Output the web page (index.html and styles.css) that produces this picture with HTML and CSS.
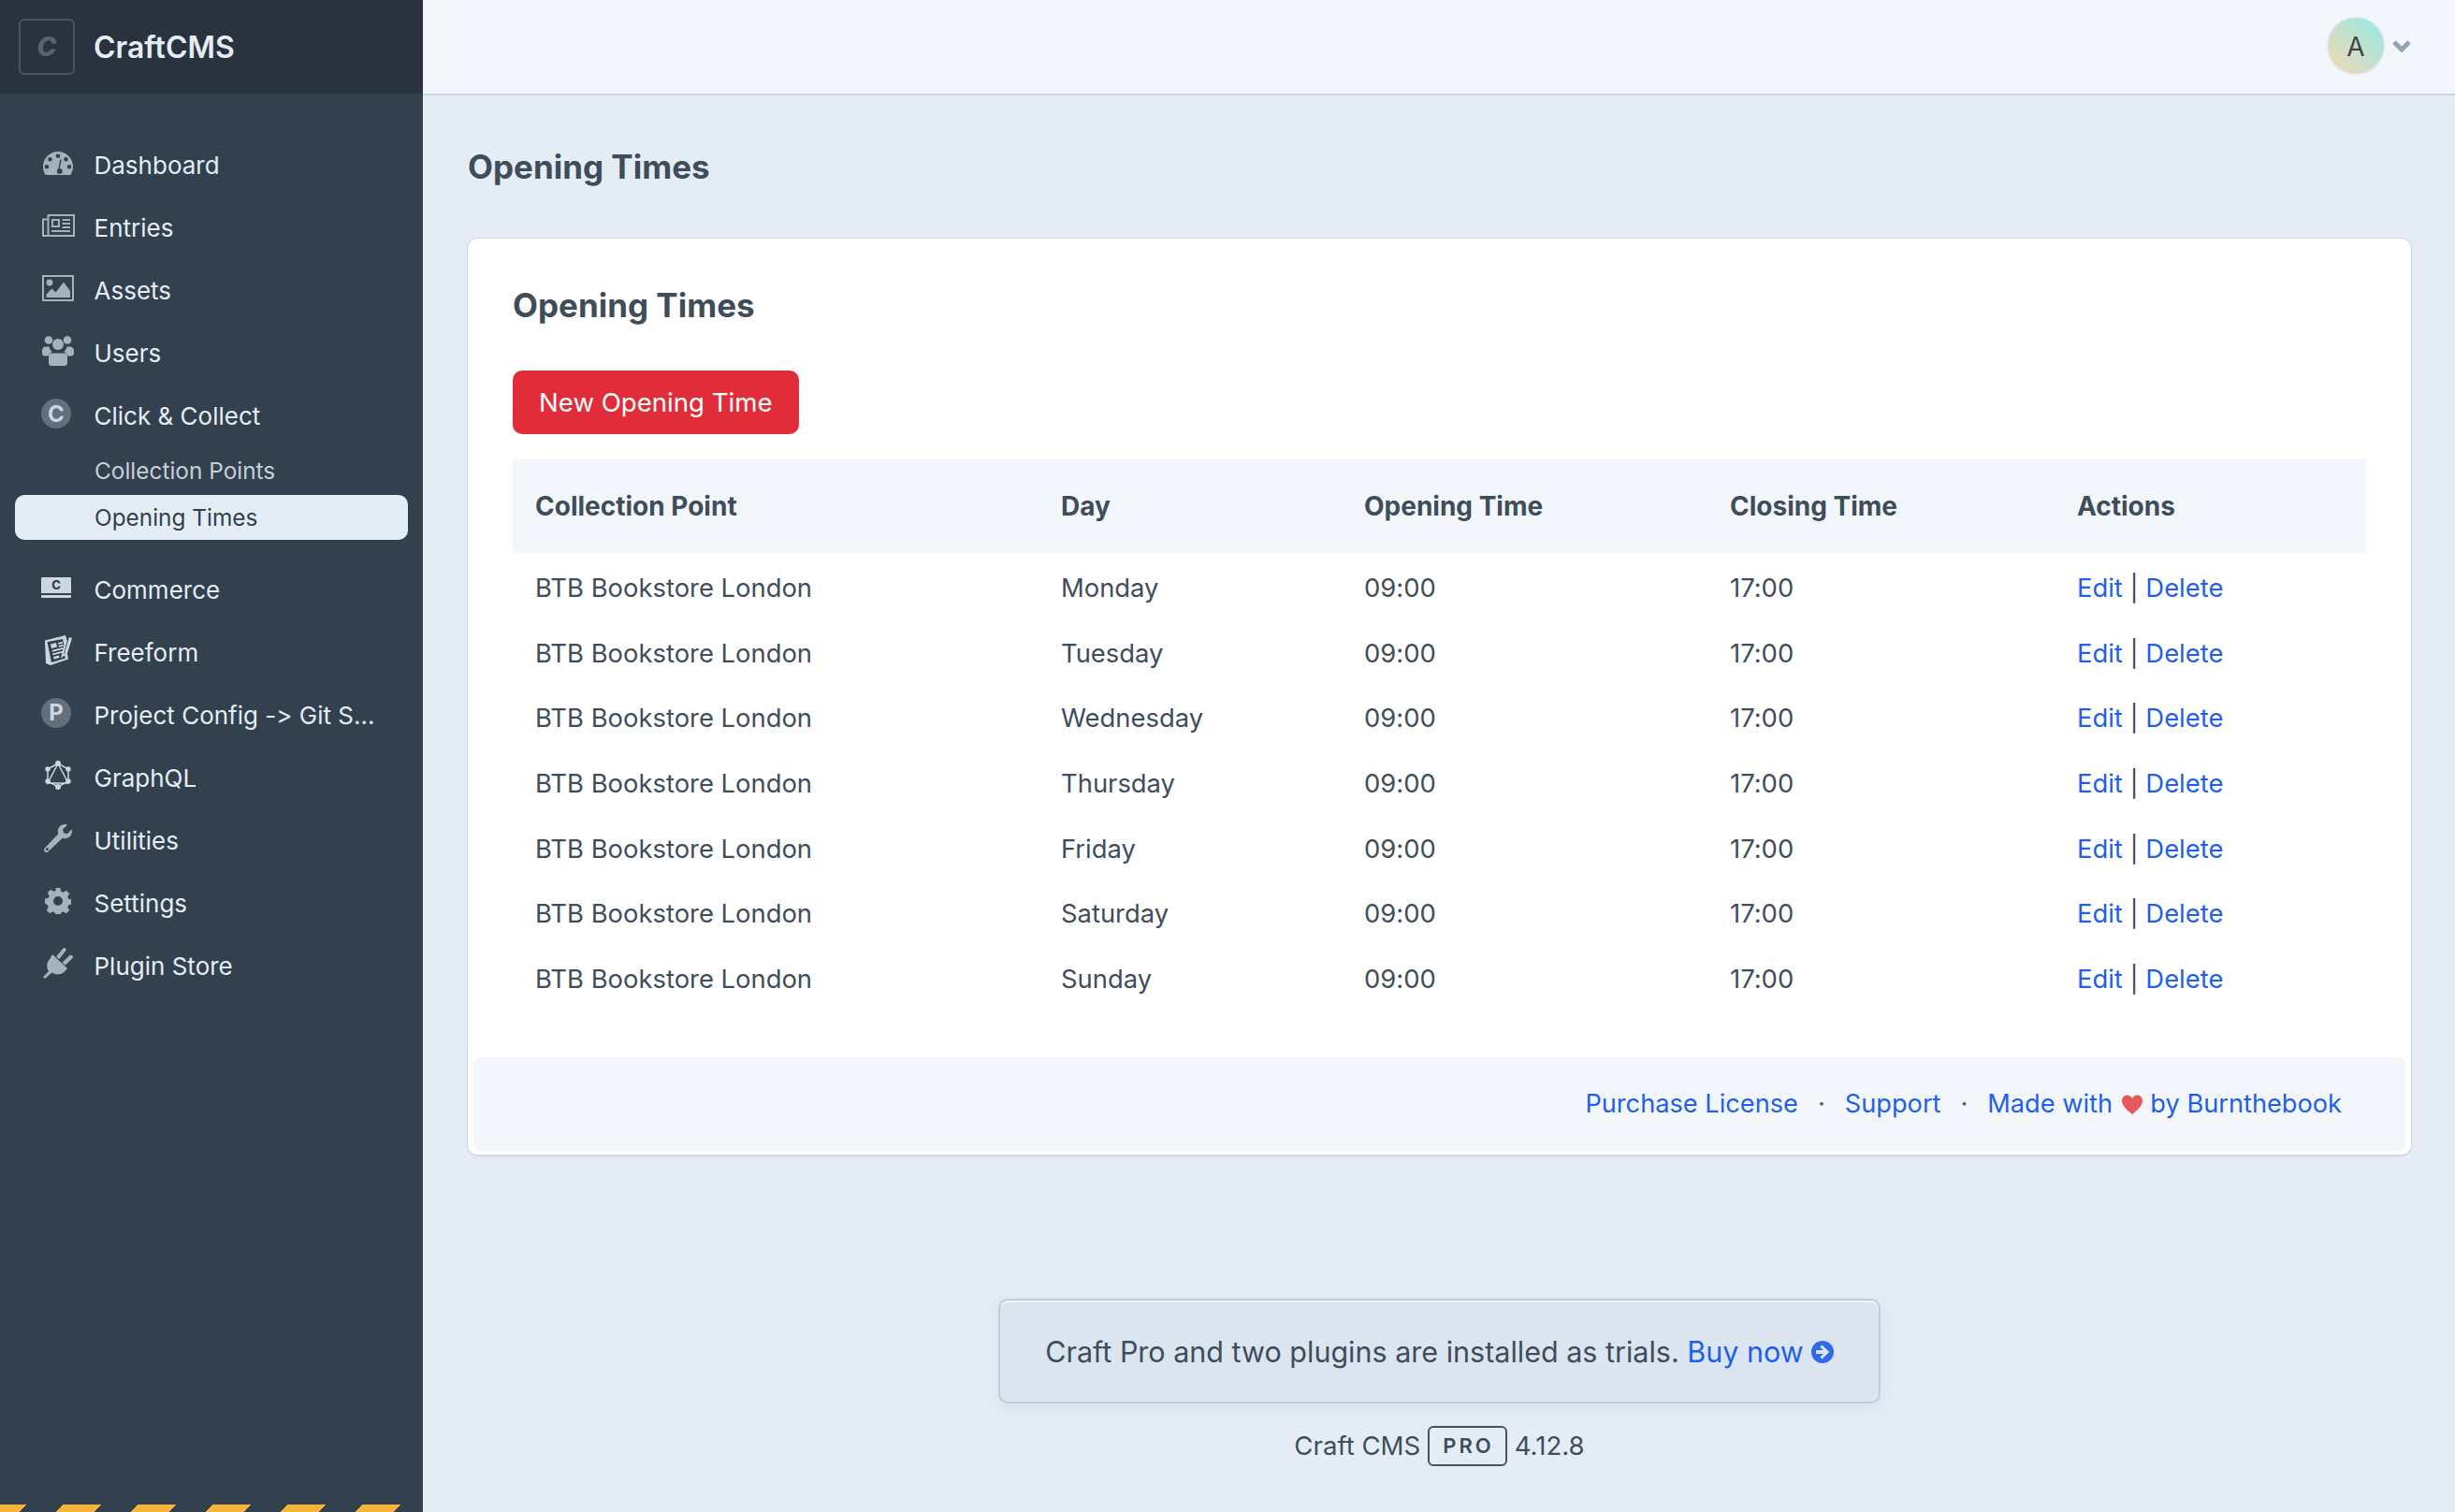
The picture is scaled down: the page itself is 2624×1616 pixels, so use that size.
FILE: index.html
```html
<!DOCTYPE html>
<html lang="en">
<head>
<meta charset="UTF-8">
<meta name="viewport" content="width=device-width, initial-scale=1.0">
<title>Opening Times - CraftCMS</title>
<link rel="stylesheet" href="styles.css">
</head>
<body>

<div class="shell">

  <aside class="sidebar">
    <div class="brand">
      <span class="brand-logo">C</span>
      <span class="brand-name">CraftCMS</span>
    </div>

    <nav class="nav">
      <a class="nav-item" href="#">
        <span class="nav-icon">
          <svg width="32" height="25" viewBox="0 0 32 25"><path fill-rule="evenodd" d="M16 0C7.2 0 0 7.2 0 16c0 3.3 1 6.4 2.700 9h26.600c1.700-2.600 2.700-5.700 2.700-9C32 7.200 24.800 0 16 0zM16 2.500a2.300 2.300 0 1 1 0 4.600 2.300 2.300 0 0 1 0-4.600zM7.500 6a2.300 2.300 0 1 1 0 4.600 2.300 2.300 0 0 1 0-4.600zM24.500 6a2.300 2.300 0 1 1 0 4.600 2.300 2.300 0 0 1 0-4.600zM4 14a2.300 2.300 0 1 1 0 4.600A2.300 2.300 0 0 1 4 14zM28 14a2.300 2.300 0 1 1 0 4.600 2.300 2.300 0 0 1 0-4.600zM18.300 8.200l1.500.4-2 9.400a3 3 0 1 1-3 3 3 3 0 0 1 1.600-2.700z"/></svg>
        </span>
        Dashboard
      </a>
      <a class="nav-item" href="#">
        <span class="nav-icon">
          <svg width="37" height="26" viewBox="0 0 37 26"><path fill-rule="evenodd" d="M6.500 1h29.500v24H2a2 2 0 0 1-1-1.500V5.500h5.500zM8.500 3v20H34V3zM6.500 7.500H3V23h3.500z"/><path d="M11 6h9v9h-9zM22.500 6H31v2h-8.500zM22.500 10H31v2h-8.500zM22.500 14H31v2h-8.500zM11 18h20v2H11z"/><path fill="#33404d" d="M13 8h5v5h-5z"/></svg>
        </span>
        Entries
      </a>
      <a class="nav-item" href="#">
        <span class="nav-icon">
          <svg width="34" height="28" viewBox="0 0 34 28"><path fill-rule="evenodd" d="M1 0h32a1 1 0 0 1 1 1v26a1 1 0 0 1-1 1H1a1 1 0 0 1-1-1V1a1 1 0 0 1 1-1zM2 2v24h30V2z"/><circle cx="8" cy="8" r="3.400"/><path d="M4.500 24v-3.500l6-6 4 4 8.500-11 7 9.500v7z"/></svg>
        </span>
        Assets
      </a>
      <a class="nav-item" href="#">
        <span class="nav-icon">
          <svg width="34" height="32" viewBox="0 0 34 32"><circle cx="7" cy="4.500" r="4.300"/><circle cx="27" cy="4.500" r="4.300"/><circle cx="17" cy="9" r="6"/><path d="M0 15.500c0-2.200 1.800-4 4-4h3.500c.4 2.300 1.500 4.200 3.300 5.500-2 .9-3.700 2.600-4.500 4.500H3c-1.700 0-3-1.300-3-3zM34 15.500c0-2.200-1.800-4-4-4h-3.500c-.4 2.300-1.500 4.200-3.300 5.500 2 .9 3.700 2.600 4.500 4.500H31c1.700 0 3-1.300 3-3zM10 18.500h14c1.700 0 3 1.300 3 3V29c0 1.700-1.300 3-3 3H10c-1.700 0-3-1.300-3-3v-7.500c0-1.700 1.300-3 3-3z"/></svg>
        </span>
        Users
      </a>
      <a class="nav-item" href="#">
        <span class="nav-icon"><span class="nav-badge">C</span></span>
        Click &amp; Collect
      </a>
      <div class="subnav">
        <a class="subnav-item" href="#">Collection Points</a>
        <a class="subnav-item selected" href="#">Opening Times</a>
      </div>
      <a class="nav-item" href="#">
        <span class="nav-icon icon-light">
          <svg class="icon-commerce" width="32" height="22" viewBox="0 0 32 22"><path d="M1 0h30a1 1 0 0 1 1 1v16H0V1a1 1 0 0 1 1-1zM0 19h32v2a1 1 0 0 1-1 1H1a1 1 0 0 1-1-1z"/><text class="commerce-c" x="16" y="13" text-anchor="middle">C</text></svg>
        </span>
        Commerce
      </a>
      <a class="nav-item" href="#">
        <span class="nav-icon icon-light">
          <svg width="30" height="32" viewBox="0 0 30 32"><path fill-rule="evenodd" d="M1 5.500L23 0l1.800 6-3.800 14 3.500-2.500L26 25.500 7 32 2 30zM3.500 7l4.500 22 15-4.500-1-3-4 3 3.500-14.500-1.500-6z"/><path d="M7 9.500l6-1.500 1 4.500-6 1.500zM15 8l5-1.200.4 1.700-5 1.200zM15.500 11l5-1.200.4 1.700-5 1.200zM8.500 16l12-3 .4 1.700-12 3zM9 19.500l11-2.800.4 1.700-11 2.800zM10 23l6-1.500.7 2.600-6 1.500z"/><path d="M27 2l3 1-4.800 15.500-2.200 2-.6-3z"/></svg>
        </span>
        Freeform
      </a>
      <a class="nav-item" href="#">
        <span class="nav-icon"><span class="nav-badge">P</span></span>
        Project Config -&gt; Git S...
      </a>
      <a class="nav-item" href="#">
        <span class="nav-icon icon-light">
          <svg width="28" height="31" viewBox="0 0 28 31"><path class="line-icon" d="M14 3L25 24H3zM14 3L3 9v13l11 6 11-6V9z"/><circle cx="14" cy="3" r="3"/><circle cx="3" cy="9" r="2.700"/><circle cx="25" cy="9" r="2.700"/><circle cx="3" cy="22" r="2.700"/><circle cx="25" cy="22" r="2.700"/><circle cx="14" cy="28" r="3"/></svg>
        </span>
        GraphQL
      </a>
      <a class="nav-item" href="#">
        <span class="nav-icon">
          <svg width="30" height="30" viewBox="0 0 30 30"><path fill-rule="evenodd" d="M30 7.500c0 4.300-3.500 7.700-7.700 7.700-.9 0-1.800-.2-2.600-.5L4.500 29.300c-1 1-2.700 1-3.700 0s-1-2.700-.1-3.700L15.300 10.300c-.3-.8-.5-1.700-.5-2.600C14.800 3.400 18.300 0 22.500 0c1 0 1.900.2 2.700.5l-5.200 5 1 3.700 3.800 1 4.900-5c.2.600.3 1.500.3 2.300zM3.500 25a1.500 1.500 0 1 0 0 3 1.500 1.500 0 0 0 0-3z"/></svg>
        </span>
        Utilities
      </a>
      <a class="nav-item" href="#">
        <span class="nav-icon">
          <svg width="28" height="28" viewBox="0 0 28 28"><path fill-rule="evenodd" d="M11.500 0h5l.7 3.700c.9.300 1.700.6 2.400 1.100l3.200-2.100 3.500 3.500-2.100 3.200c.5.800.8 1.600 1.100 2.400l3.700.7v5l-3.700.7c-.3.900-.6 1.700-1.100 2.400l2.100 3.200-3.500 3.500-3.200-2.100c-.8.500-1.600.8-2.400 1.100l-.7 3.700h-5l-.7-3.700c-.9-.3-1.700-.6-2.400-1.100l-3.200 2.100-3.500-3.500 2.100-3.200c-.5-.8-.8-1.600-1.100-2.400L0 16.500v-5l3.700-.7c.3-.9.6-1.700 1.100-2.400L2.700 5.200l3.500-3.500 3.200 2.100c.8-.5 1.600-.8 2.400-1.100zM14 9a5 5 0 1 0 0 10 5 5 0 0 0 0-10z"/></svg>
        </span>
        Settings
      </a>
      <a class="nav-item" href="#">
        <span class="nav-icon">
          <svg width="32" height="33" viewBox="0 0 32 33"><path d="M0 31l6-6c-3-5-2-10 1.500-13.500L10 7l16 15-3 3.500c-3.500 3.500-9 4-13.500 1L2 33zM14.200 9.500L21 .9c.9-1.100 2.600-1.200 3.300 0 .5.800.3 1.800-.3 2.500l-6.700 8.900zM20.500 15.800l7.600-7.300c1-1 2.600-.9 3.400.2.600.8.500 1.900-.2 2.600l-7.700 7.500z"/></svg>
        </span>
        Plugin Store
      </a>
    </nav>

    <div class="stripes"></div>
  </aside>

  <div class="main">
    <header class="topbar">
      <span class="avatar">A</span>
      <svg class="chevron" width="20" height="13" viewBox="0 0 20 13"><path d="M2 2l8 8 8-8"/></svg>
    </header>

    <div class="content">
      <h1 class="page-title">Opening Times</h1>

      <section class="card">
        <div class="card-body">
          <h2 class="card-title">Opening Times</h2>
          <a class="button" href="#">New Opening Time</a>

          <table class="times">
            <thead>
              <tr><th>Collection Point</th><th>Day</th><th>Opening Time</th><th>Closing Time</th><th>Actions</th></tr>
            </thead>
            <tbody>
              <tr><td>BTB Bookstore London</td><td>Monday</td><td>09:00</td><td>17:00</td><td><a href="#">Edit</a> | <a href="#">Delete</a></td></tr>
              <tr><td>BTB Bookstore London</td><td>Tuesday</td><td>09:00</td><td>17:00</td><td><a href="#">Edit</a> | <a href="#">Delete</a></td></tr>
              <tr><td>BTB Bookstore London</td><td>Wednesday</td><td>09:00</td><td>17:00</td><td><a href="#">Edit</a> | <a href="#">Delete</a></td></tr>
              <tr><td>BTB Bookstore London</td><td>Thursday</td><td>09:00</td><td>17:00</td><td><a href="#">Edit</a> | <a href="#">Delete</a></td></tr>
              <tr><td>BTB Bookstore London</td><td>Friday</td><td>09:00</td><td>17:00</td><td><a href="#">Edit</a> | <a href="#">Delete</a></td></tr>
              <tr><td>BTB Bookstore London</td><td>Saturday</td><td>09:00</td><td>17:00</td><td><a href="#">Edit</a> | <a href="#">Delete</a></td></tr>
              <tr><td>BTB Bookstore London</td><td>Sunday</td><td>09:00</td><td>17:00</td><td><a href="#">Edit</a> | <a href="#">Delete</a></td></tr>
            </tbody>
          </table>
        </div>

        <footer class="card-footer">
          <a href="#">Purchase License</a>
          <span class="dot">·</span>
          <a href="#">Support</a>
          <span class="dot">·</span>
          <a href="#">Made with
            <svg class="heart" width="22" height="22" viewBox="0 0 22 22"><path d="M11 21C7 17.500 0 12.500 0 6.500 0 3 2.500.5 5.500.5c2.300 0 4.300 1.200 5.500 3.500C12.200 1.700 14.200.5 16.500.5 19.500.5 22 3 22 6.500 22 12.500 15 17.500 11 21z"/></svg>
            by Burnthebook</a>
        </footer>
      </section>

      <div class="notice">
        Craft Pro and two plugins are installed as trials.&nbsp;<a href="#">Buy now</a>
        <svg class="notice-arrow" width="24" height="24" viewBox="0 0 24 24"><path fill-rule="evenodd" d="M12 0a12 12 0 1 1 0 24 12 12 0 0 1 0-24zM11.500 4.500L9.300 6.700 12.900 10H5v4h7.900l-3.600 3.300 2.200 2.200 7.700-7.500z"/></svg>
      </div>

      <div class="version">
        Craft CMS <span class="edition">PRO</span> 4.12.8
      </div>
    </div>
  </div>

</div>

</body>
</html>
```

FILE: styles.css
```css
* {
  box-sizing: border-box;
}
html, body {
  height: 100%;
}
body {
  margin: 0;
  font-family: Inter, "Noto Sans", sans-serif;
  font-size: 27.200px;
  font-variant-ligatures: none;
  font-feature-settings: "calt" 0;
  color: #3f4d5a;
  background-color: #e4edf6;
  overflow: hidden;
}
a {
  color: #1f5fea;
  text-decoration: none;
}
.shell {
  display: flex;
  height: 100%;
}

/* sidebar */
.sidebar {
  position: relative;
  width: 452px;
  flex-shrink: 0;
  background-color: #33404d;
}
.brand {
  display: flex;
  align-items: center;
  height: 100px;
  padding-left: 20px;
  background-color: #29323d;
}
.brand-logo {
  display: flex;
  align-items: center;
  justify-content: center;
  width: 60px;
  height: 60px;
  margin-right: 20px;
  border: 2px solid #47535f;
  border-radius: 6px;
  color: #56646f;
  font-size: 28px;
  font-weight: 800;
  font-style: italic;
}
.brand-name {
  color: #e4edf6;
  font-size: 32px;
  font-weight: 600;
}
.nav {
  padding-top: 43px;
}
.nav-item {
  display: flex;
  align-items: center;
  height: 67px;
  padding-left: 42px;
  color: #e4edf6;
  font-size: 26px;
}
.nav-icon {
  display: flex;
  align-items: center;
  justify-content: center;
  width: 40px;
  margin-right: 18.500px;
  margin-bottom: 5px;
  fill: #a5b1bd;
}
.icon-light {
  fill: #cdd6e0;
}
.icon-commerce {
  margin-right: 4px;
}
.line-icon {
  fill: none;
  stroke: #cdd6e0;
  stroke-width: 1.500;
}
.commerce-c {
  fill: #33404d;
  font-size: 13px;
  font-weight: 800;
}
.nav-badge {
  display: flex;
  align-items: center;
  justify-content: center;
  width: 32px;
  height: 32px;
  margin-right: 4px;
  border-radius: 50%;
  background-color: #626f7c;
  color: #cdd6e0;
  font-size: 24px;
  font-weight: 700;
}
.subnav {
  margin-top: -1.500px;
  margin-bottom: 20px;
}
.subnav-item {
  display: block;
  height: 48px;
  margin: 2px 16px 0;
  padding-left: 85px;
  border-radius: 10px;
  color: #c5d0db;
  font-size: 24.400px;
  line-height: 48px;
}
.subnav-item.selected {
  background-color: #e4edf6;
  color: #33404d;
}
.stripes {
  position: absolute;
  left: 0;
  bottom: 0;
  width: 100%;
  height: 8px;
  background-image: repeating-linear-gradient(135deg, #f5b53a 0, #f5b53a 19.800px, transparent 19.800px, transparent 47.400px, #f5b53a 47.400px, #f5b53a 56.570px);
}

/* top bar */
.main {
  flex: 1;
  min-width: 0;
}
.topbar {
  display: flex;
  align-items: center;
  justify-content: flex-end;
  height: 102px;
  padding-right: 47px;
  padding-bottom: 2px;
  background-color: #f3f7fc;
  border-bottom: 2px solid #cdd8e4;
}
.avatar {
  display: flex;
  align-items: center;
  justify-content: center;
  width: 64px;
  height: 64px;
  margin-right: 7px;
  padding-top: 2px;
  border: 2px solid #eceff5;
  border-radius: 50%;
  background-image: linear-gradient(45deg, #f6d9b1, #93e9e6);
  color: #444;
  font-size: 28px;
}
.chevron {
  fill: none;
  stroke: #98a3af;
  stroke-width: 5;
}

/* content */
.content {
  padding: 0 47px 0 48px;
}
.page-title {
  margin: 0;
  padding: 51px 0 52px;
  font-size: 35px;
  line-height: 50px;
  font-weight: 700;
}
.card {
  padding-bottom: 4px;
  background-color: #fff;
  border-radius: 10px;
  box-shadow: 0 0 0 1px #cfdbe9, 0 2px 2px #c9d5e3;
}
.card-body {
  padding: 46px 48px 51px;
}
.card-title {
  margin: 0 0 45px;
  font-size: 35px;
  line-height: 50px;
  font-weight: 700;
}
.button {
  display: inline-block;
  height: 68px;
  padding: 0 28px;
  border-radius: 10px;
  background-color: #e12d39;
  color: #fff;
  font-size: 27.600px;
  line-height: 68px;
}
.times {
  width: 100%;
  margin-top: 27px;
  border-collapse: collapse;
  table-layout: fixed;
}
.times th, .times td {
  padding: 0 0 0 24px;
  text-align: left;
}
.times th {
  height: 100px;
  font-size: 28px;
  font-weight: 700;
  background-color: #f3f7fc;
}
.times td {
  height: 69.700px;
  padding-top: 4px;
  font-size: 27.400px;
}
.times th:nth-child(1) { width: 562px; }
.times th:nth-child(2) { width: 324px; }
.times th:nth-child(3) { width: 391px; }
.times th:nth-child(4) { width: 371px; }
.card-footer {
  display: flex;
  align-items: center;
  justify-content: flex-end;
  height: 100px;
  margin: 0 6px;
  padding-right: 68px;
  border-radius: 8px;
  background-color: #f3f7fc;
}
.dot {
  margin: 0 21px;
  color: #555;
}
.heart {
  margin: 0 1px 0 2px;
  fill: #e55a58;
  vertical-align: -3px;
}

/* trial notice */
.notice {
  display: flex;
  align-items: center;
  justify-content: center;
  width: 943px;
  height: 112px;
  margin: 154px auto 0;
  padding-top: 2px;
  border: 2px solid #bfccda;
  border-radius: 10px;
  background-color: #dbe5ef;
  box-shadow: inset 0 2px 0 #eef3f8, 0 4px 16px rgba(100,120,150,0.10);
  font-size: 30.500px;
}
.notice-arrow {
  margin-left: 8px;
  fill: #2f6aeb;
}
.version {
  display: flex;
  align-items: center;
  justify-content: center;
  gap: 8px;
  margin-top: 24px;
  font-size: 27.600px;
}
.edition {
  height: 43px;
  padding: 0 12px 0 14px;
  border: 2px solid #46525f;
  border-radius: 6px;
  font-size: 22px;
  line-height: 39px;
  font-weight: 600;
  letter-spacing: 3px;
}
```
